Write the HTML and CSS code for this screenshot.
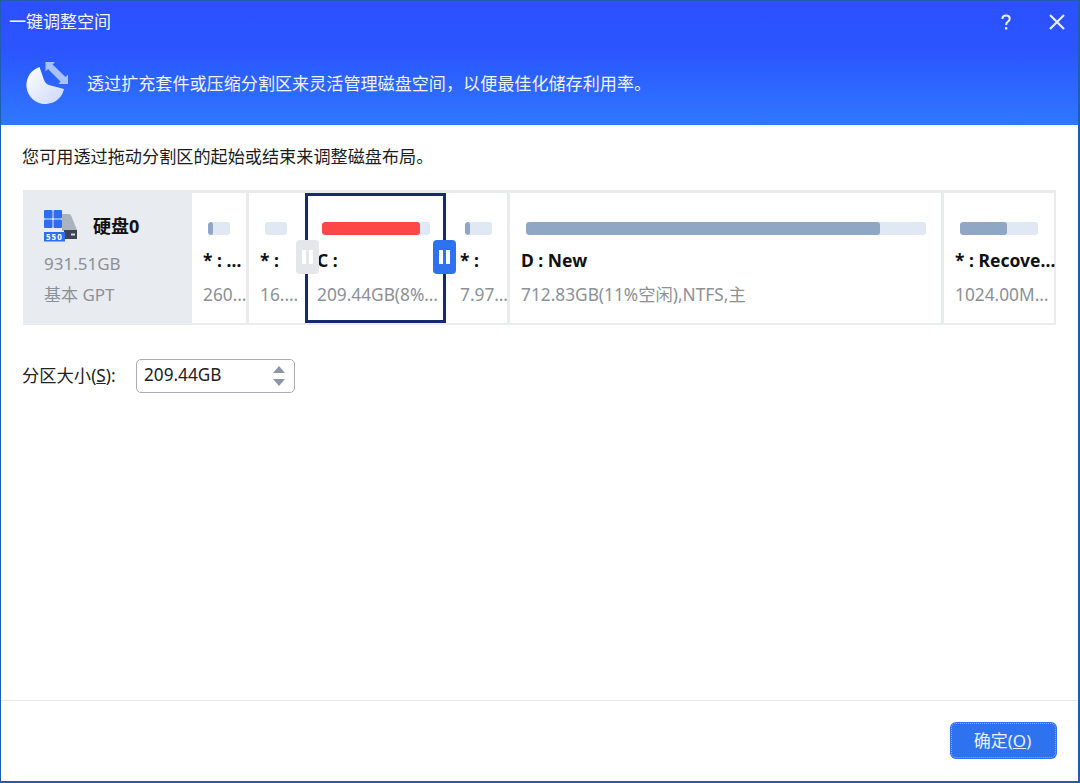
FILE: index.html
```html
<!DOCTYPE html>
<html lang="zh-CN">
<head>
<meta charset="utf-8">
<title>一键调整空间</title>
<link rel="stylesheet" href="styles.css">
</head>
<body>
<div class="window">
  <header class="banner">
    <div class="titlebar">
      <span class="title">一键调整空间</span>
      <div class="win-actions">
        <svg class="win-icon" viewBox="0 0 20 20" width="20" height="20"><path d="M6.300 7c.2-2.200 1.700-3.400 3.800-3.400 2.100 0 3.600 1.300 3.600 3.100 0 1.500-.9 2.300-1.900 3-1 .7-1.600 1.300-1.600 2.700v.6" fill="none" stroke="#e9efff" stroke-width="2"/><rect x="9" y="15.200" width="2.300" height="2.300" fill="#e9efff"/></svg>
        <svg class="win-icon" viewBox="0 0 20 20" width="20" height="20"><path d="M3 3l14 14M17 3L3 17" fill="none" stroke="#e9efff" stroke-width="2.200"/></svg>
      </div>
    </div>
    <div class="intro">
      <svg class="intro-icon" viewBox="0 0 44 46" width="44" height="46">
        <defs><linearGradient id="pie" x1="0" y1="0" x2="1" y2="1"><stop offset="0" stop-color="#ffffff"/><stop offset="1" stop-color="#c9d7fa"/></linearGradient></defs>
        <path d="M13.500 7L18 20Q19.500 24 23 25L38 29A19 19 0 1 1 13.500 7Z" fill="url(#pie)"/>
        <path d="M19.500 2H29L26.500 4.500L39.500 17L42 14.500V24H32.500L34.500 21.500L22 9L19.500 11.500Z" fill="#a9c2fb"/>
      </svg>
      <p class="intro-text">透过扩充套件或压缩分割区来灵活管理磁盘空间，以便最佳化储存利用率。</p>
    </div>
  </header>

  <main class="content">
    <p class="hint">您可用透过拖动分割区的起始或结束来调整磁盘布局。</p>

    <section class="disk-map">
      <div class="disk-info">
        <div class="disk-head">
          <svg class="disk-icon" viewBox="0 0 33 32" width="33" height="32">
            <path d="M18 4h6.500c1.500 0 2.300.7 2.800 2l5.700 14v1H18z" fill="#aab3c0"/>
            <rect x="20" y="20" width="13" height="9" fill="#3d4450"/>
            <rect x="27" y="23.500" width="4" height="2" fill="#d7dbe2"/>
            <rect x="0" y="0" width="8.500" height="8.500" rx="1" fill="#2f6df0"/>
            <rect x="9.500" y="0" width="8.500" height="8.500" rx="1" fill="#2f6df0"/>
            <rect x="0" y="9.500" width="8.500" height="8.500" rx="1" fill="#2f6df0"/>
            <rect x="9.500" y="9.500" width="8.500" height="8.500" rx="1" fill="#2f6df0"/>
            <rect x="0" y="22" width="21" height="9.500" fill="#2f6df0"/>
            <text class="ssd-label" x="2" y="30">550</text>
          </svg>
          <span class="disk-name">硬盘0</span>
        </div>
        <div class="disk-line">931.51GB</div>
        <div class="disk-line">基本 GPT</div>
      </div>

      <div class="parts">
        <div class="part part-a">
          <div class="bar"><span class="fill" style="width:22%"></span></div>
          <div class="part-name">* : EFI system partition</div>
          <div class="part-meta">260.00MB(70%空闲),FAT32,系统</div>
        </div>
        <div class="part part-b">
          <div class="bar"></div>
          <div class="part-name">* :</div>
          <div class="part-meta">16.00MB(0%空闲),其他</div>
        </div>
        <div class="part part-c">
          <div class="bar"><span class="fill fill-red" style="width:91%"></span></div>
          <div class="part-name">C :</div>
          <div class="part-meta">209.44GB(8%空闲),NTFS,系统,主</div>
          <span class="handle handle-left"><i></i><i></i></span>
          <span class="handle handle-right"><i></i><i></i></span>
        </div>
        <div class="part part-d">
          <div class="bar"><span class="fill" style="width:18%"></span></div>
          <div class="part-name">* :</div>
          <div class="part-meta">7.97GB(10%空闲),NTFS</div>
        </div>
        <div class="part part-e">
          <div class="bar"><span class="fill" style="width:88.500%"></span></div>
          <div class="part-name">D : New</div>
          <div class="part-meta">712.83GB(11%空闲),NTFS,主</div>
        </div>
        <div class="part part-f">
          <div class="bar"><span class="fill" style="width:60%"></span></div>
          <div class="part-name">* : Recovery Partition</div>
          <div class="part-meta">1024.00MB(30%空闲),NTFS</div>
        </div>
      </div>
    </section>

    <div class="size-row">
      <label class="size-label">分区大小(<u>S</u>):</label>
      <div class="spin">
        <span class="spin-value">209.44GB</span>
        <span class="spin-arrows"><i class="arrow-up"></i><i class="arrow-down"></i></span>
      </div>
    </div>
  </main>

  <footer class="footer">
    <button class="ok" type="button">确定(<u>O</u>)</button>
  </footer>
</div>
</body>
</html>
```
FILE: styles.css
```css
* { box-sizing: border-box; }
html, body { margin: 0; padding: 0; }
body {
  width: 1080px;
  height: 783px;
  overflow: hidden;
  background: #fff;
  font-family: "Noto Sans", "Noto Sans CJK SC", sans-serif;
}
.window {
  width: 1080px;
  height: 783px;
  display: flex;
  flex-direction: column;
  border-style: solid;
  border-color: #1f5cb4;
  border-width: 1px 2px 2px 1px;
  background: #fff;
}
.banner {
  height: 124px;
  flex: none;
  background: linear-gradient(180deg, #2c50ff 0%, #2b55ff 40%, #2f78ff 100%);
  color: #fff;
}
.titlebar {
  height: 42px;
  display: flex;
  align-items: center;
  justify-content: space-between;
  padding: 0 11px 0 8px;
}
.title { font-size: 17px; color: #f2f5ff; line-height: 42px; }
.win-actions { display: flex; gap: 31px; align-items: center; }
.win-icon { display: block; }
.intro {
  display: flex;
  align-items: center;
  height: 64px;
  padding-left: 25px;
  margin-top: 9px;
}
.intro-icon { display: block; flex: none; margin: -2px 17px 0 0; }
.intro-text { margin: 0; padding-bottom: 3px; font-size: 17.100px; color: #eef3ff; white-space: nowrap; }
.content { flex: 1; padding: 0 21px; min-height: 0; }
.hint { margin: 21px 0 0; font-size: 17.150px; line-height: 22px; color: #1c1c1c; white-space: nowrap; }
.disk-map {
  margin: 22px 0 0 1px;
  width: 1033px;
  height: 135px;
  display: flex;
  border-style: solid;
  border-color: #e9ebee;
  border-width: 3px 2px 2px 2px;
  background: #e9ebee;
}
.disk-info {
  width: 167px;
  flex: none;
  padding: 17px 0 0 19px;
  background: #e8ebf0;
}
.disk-head { display: flex; align-items: center; height: 32px; }
.disk-icon { display: block; flex: none; }
.ssd-label { font-size: 8px; font-weight: 700; fill: #fff; letter-spacing: 1px; font-family: "Noto Sans", sans-serif; }
.disk-name { margin: -2px 0 0 16px; font-size: 18px; font-weight: 700; color: #111; }
.disk-line { font-size: 17px; line-height: 22px; color: #8d9095; margin-top: 9px; }
.disk-head + .disk-line { margin-top: 11px; }
.parts { flex: 1; display: flex; gap: 3px; min-width: 0; }
.part {
  position: relative;
  flex: none;
  height: 130px;
  background: #fff;
  padding: 29px 0 0 11px;
}
.part-a { width: 54px; }
.part-b { width: 56px; }
.part-c { width: 141px; margin: 0 -3px; padding: 26px 2px 0 9px; border: 3px solid #172a6e; z-index: 1; }
.part-d { width: 61px; padding-left: 14px; }
.part-e { width: 431px; }
.part-f { width: 110px; }
.bar {
  height: 13px;
  margin-left: 5px;
  background: #e0e8f3;
  border-radius: 3px;
  overflow: hidden;
}
.part-a .bar, .part-b .bar { width: 22px; }
.part-c .bar { width: 108px; }
.part-d .bar { width: 27px; }
.part-e .bar { width: 400px; }
.part-f .bar { width: 78px; }
.fill { display: block; height: 100%; background: #8fa6c5; border-radius: 3px; }
.fill-red { background: #ff4646; }
.part-name {
  margin-top: 14px;
  font-size: 17.500px;
  line-height: 22px;
  font-weight: 700;
  color: #111;
  white-space: nowrap;
  overflow: hidden;
  text-overflow: ellipsis;
}
.part-meta {
  margin-top: 13px;
  font-size: 17.300px;
  line-height: 22px;
  color: #8d9095;
  white-space: nowrap;
  overflow: hidden;
  text-overflow: ellipsis;
}
.part-a .part-meta, .part-d .part-meta, .part-f .part-name { margin-right: -2px; }
.handle {
  position: absolute;
  top: 44px;
  width: 23px;
  height: 34px;
  border-radius: 4px;
  display: flex;
  justify-content: center;
  align-items: center;
  gap: 3px;
  z-index: 2;
}
.handle i { display: block; width: 4px; height: 14px; background: #fff; }
.handle-left { left: -12px; background: #e4e6e9; }
.handle-right { right: -13px; background: #2f72f0; }
.size-row { display: flex; align-items: center; margin-top: 34px; }
.size-label { font-size: 17.300px; color: #222; width: 114px; flex: none; white-space: nowrap; padding-bottom: 4px; }
.spin {
  width: 159px;
  height: 34px;
  border: 1px solid #a9adb3;
  border-radius: 5px;
  display: flex;
  align-items: center;
  justify-content: space-between;
  padding: 0 9px 0 7px;
  background: #fff;
}
.spin-value { font-size: 17.200px; color: #222; padding-bottom: 3px; }
.spin-arrows { display: flex; flex-direction: column; gap: 6px; }
.spin-arrows i { display: block; width: 0; height: 0; border-left: 6px solid transparent; border-right: 6px solid transparent; }
.arrow-up { border-bottom: 7px solid #8b98a8; }
.arrow-down { border-top: 7px solid #8b98a8; }
.footer {
  height: 81px;
  flex: none;
  border-top: 1px solid #e8e8e8;
  display: flex;
  justify-content: flex-end;
  padding: 21px 21px 0 0;
}
.ok {
  width: 107px;
  height: 37px;
  border: none;
  outline: 1px dotted #8fb2f5;
  outline-offset: -2px;
  border-radius: 6px;
  background: #2f72f0;
  color: #e8f0ff;
  font-family: inherit;
  font-size: 17px;
  padding: 0 2px 2px 0;
}
```
